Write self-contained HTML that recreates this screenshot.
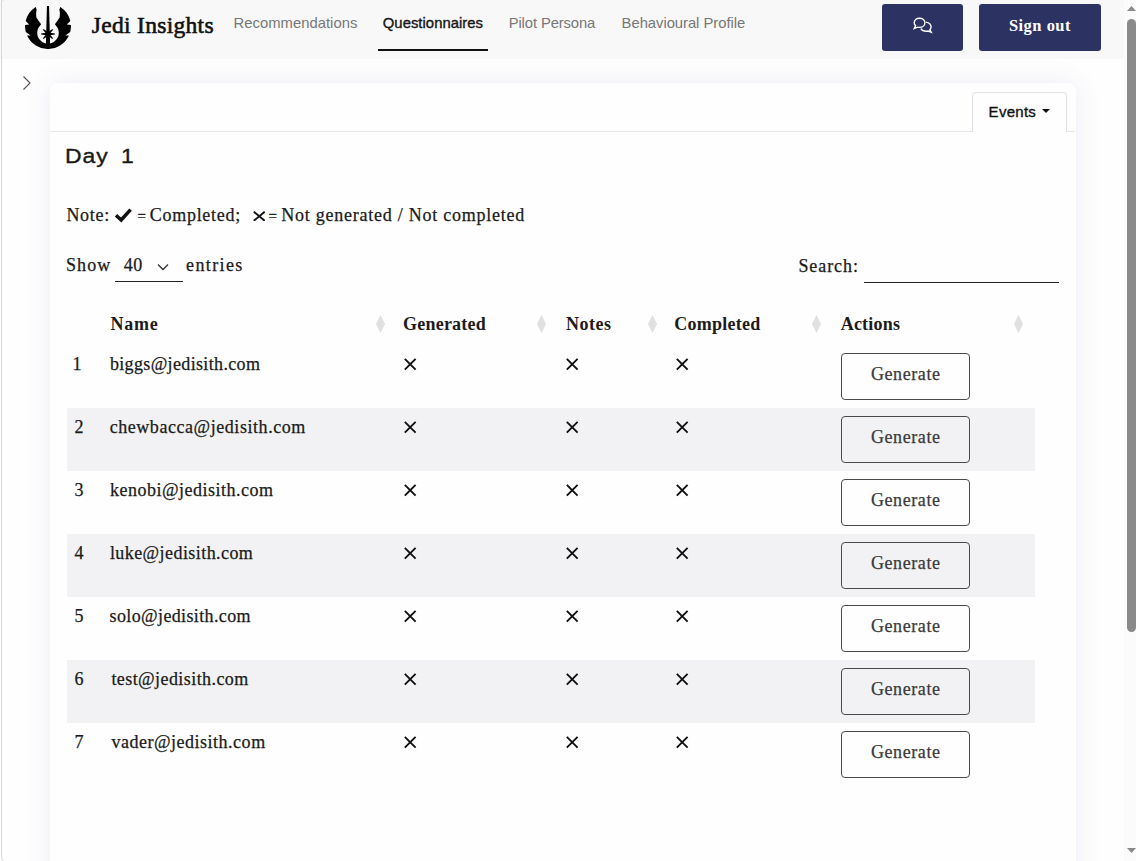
<!DOCTYPE html>
<html><head><meta charset="utf-8">
<style>
html,body{margin:0;padding:0;width:1136px;height:861px;overflow:hidden;background:#fefefe;}
body{position:relative;font-family:"Liberation Serif",serif;color:#1a1a1a;}
.a{position:absolute;}
.t{position:absolute;white-space:nowrap;}
.sans{font-family:"Liberation Sans",sans-serif;}
#hdr{left:0;top:0;width:1136px;height:59px;background:#f8f8f8;}
.nav{font-family:"Liberation Sans",sans-serif;font-size:14.8px;line-height:14.8px;color:#777;top:15.5px;}
.btn{background:#2c3262;border-radius:3px;}
#card{left:50px;top:83px;width:1026px;height:900px;background:#fefefe;border-radius:8px;box-shadow:0 0 28px rgba(50,70,150,0.09);}
.bt{font-size:18px;line-height:18px;color:#1a1a1a;-webkit-text-stroke:0.25px #1a1a1a;}
.th{font-size:18px;line-height:18px;font-weight:bold;color:#1c1c1c;top:315px;}
.stripe{left:67px;width:968px;height:63px;background:#f2f2f4;}
.gen{left:841px;width:127px;height:45px;border:1px solid #4a4a4a;border-radius:4px;}
.gen span{position:absolute;left:28.9px;top:10.8px;font-size:18px;line-height:18px;letter-spacing:0.6px;color:#3a3a3a;white-space:nowrap;-webkit-text-stroke:0.25px #3a3a3a;}
</style></head>
<body>
<div id="hdr" class="a"></div>
<div class="a" style="left:1px;top:-1px;width:1300px;height:863px;border-left:1px solid #d8d8d8;border-top:1px solid #d8d8d8;border-bottom:1px solid #d8d8d8;border-radius:3px 0 0 8px;"></div>
<svg class="a" style="left:25px;top:6px" width="46" height="43" viewBox="0 0 46 43">
  <path fill="#000" d="M10.7 1 A23 23 0 0 0 0.7 14.9 L4.2 18.5 L0.05 19.1 A23 23 0 0 0 0.8 25.9 L5.6 29.5 L2.05 29.5 A23 23 0 0 0 43.95 29.5 L40.4 29.5 L45.2 25.9 A23 23 0 0 0 45.95 19.1 L41.8 18.5 L45.3 14.9 A23 23 0 0 0 35.3 1 L34.4 3.4 L34.9 7.1 L34.7 11.3 L32.3 14.9 L29.9 18.2 L32.4 21.6 A10.8 10.8 0 1 1 13.6 21.6 L16.1 18.2 L13.7 14.9 L11.3 11.3 L11.1 7.1 L11.6 3.4 Z"/>
  <path fill="#000" d="M21.95 -0.2 L24.05 -0.2 L25.1 38 L20.9 38 Z"/>
  <path fill="#000" d="M23 29.4 L16.1 28.5 L16.1 27.5 L23 26.6 Z M23 26.6 L29.9 27.5 L29.9 28.5 L23 29.4 Z M23.99 28.99 L18.69 33.02 L17.98 32.31 L22.01 27.01 Z M23.99 27.01 L28.02 32.31 L27.31 33.02 L22.01 28.99 Z M22.01 28.99 L17.98 23.69 L18.69 22.98 L23.99 27.01 Z M22.01 27.01 L27.31 22.98 L28.02 23.69 L23.99 28.99 Z"/>
</svg>
<div class="t" style="left:91.8px;top:13.5px;font-size:23.5px;line-height:23.5px;letter-spacing:0.3px;color:#111;-webkit-text-stroke:0.6px #111;">Jedi Insights</div>
<div class="t nav" style="left:233.5px;letter-spacing:0.036px;">Recommendations</div>
<div class="t nav" style="left:382.8px;letter-spacing:0.05px;color:#151515;-webkit-text-stroke:0.35px #151515;">Questionnaires</div>
<div class="t nav" style="left:508.7px;letter-spacing:-0.117px;">Pilot Persona</div>
<div class="t nav" style="left:621.6px;letter-spacing:-0.033px;">Behavioural Profile</div>
<div class="a" style="left:378px;top:49px;width:110px;height:2px;background:#111;"></div>
<div class="a btn" style="left:882px;top:4px;width:81px;height:47px;"></div>
<svg class="a" style="left:912px;top:17px" width="22" height="18.3" viewBox="0 0 24 20">
  <g fill="none" stroke="#fff" stroke-width="1.5">
    <path d="M8.2 1.3 C4.9 1.3 2.4 3.4 2.4 6.3 C2.4 7.6 3 8.8 3.9 9.6 L2.4 12.6 L6.2 11.1 C6.9 11.3 7.5 11.4 8.2 11.4 C11.5 11.4 14.1 9.2 14.1 6.3 C14.1 3.4 11.5 1.3 8.2 1.3 Z"/>
    <path d="M15.3 5.6 C18.4 6.2 20.8 8.3 20.8 10.9 C20.8 12.1 20.3 13.2 19.5 14 L21 16.6 L17.6 15.3 C16.9 15.5 16.2 15.6 15.5 15.6 C12.8 15.6 10.6 14.5 9.6 12.8"/>
  </g>
</svg>
<div class="a btn" style="left:979px;top:4px;width:122px;height:47px;"></div>
<div class="t" style="left:1008.9px;top:17.5px;font-size:16.5px;line-height:16.5px;letter-spacing:0.486px;font-weight:bold;color:#fff;">Sign out</div>
<div class="a" style="left:1124px;top:0;width:12px;height:861px;background:#fbfbfb;"></div>
<svg class="a" style="left:1124px;top:0" width="12" height="861">
  <path d="M3 11 L7.5 6 L12 11 Z" fill="#8a8a8a"/>
  <rect x="3" y="19" width="9" height="613" rx="4.5" fill="#8a8a8a"/>
  <path d="M3 848 L12 848 L7.5 853 Z" fill="#8a8a8a"/>
</svg>
<svg class="a" style="left:20px;top:74px" width="14" height="18" viewBox="0 0 14 18">
  <path d="M3.5 2.5 L10 9 L3.5 15.5" fill="none" stroke="#5a4d4d" stroke-width="1.1"/>
</svg>
<div id="card" class="a"></div>
<div class="a" style="left:50px;top:131px;width:923px;height:1px;background:#e6e6e6;"></div>
<div class="a" style="left:1066px;top:131px;width:9px;height:1px;background:#e6e6e6;"></div>
<div class="a" style="left:972px;top:92px;width:93px;height:39px;border:1px solid #dee2e6;border-bottom:none;border-radius:4px 4px 0 0;background:#fefefe;"></div>
<div class="t sans" style="left:988.6px;top:104.2px;font-size:15px;line-height:15px;letter-spacing:0.28px;color:#111;-webkit-text-stroke:0.35px #111;">Events</div>
<svg class="a" style="left:1042px;top:109px" width="8" height="4"><path d="M0 0 L8 0 L4 4 Z" fill="#111"/></svg>
<div class="t sans" style="left:64.9px;top:146px;font-size:20.5px;line-height:20.5px;letter-spacing:0.8px;word-spacing:4.6px;color:#1a1a1a;-webkit-text-stroke:0.35px #1a1a1a;transform:scaleX(1.12);transform-origin:0 0;">Day 1</div>
<div class="t bt" style="left:66.4px;top:206px;letter-spacing:0.7px;">Note:</div>
<svg class="a" style="left:113px;top:206px" width="20" height="18" viewBox="0 0 20 18"><path d="M3 9.2 L8.2 14 L17.6 3.6" fill="none" stroke="#111" stroke-width="3.5" stroke-linejoin="miter"/></svg>
<div class="t" style="left:137.6px;top:209px;font-size:15px;line-height:15px;color:#1a1a1a;-webkit-text-stroke:0.3px #1a1a1a;">=</div>
<div class="t bt" style="left:149.8px;top:206px;letter-spacing:0.711px;">Completed;</div>
<svg class="a" style="left:252.5px;top:210.5px" width="12.5" height="10.5" viewBox="0 0 12.5 10.5"><path d="M0.8 0.7 L11.7 9.8 M11.7 0.7 L0.8 9.8" stroke="#111" stroke-width="1.9" fill="none"/></svg>
<div class="t" style="left:268.6px;top:209px;font-size:15px;line-height:15px;color:#1a1a1a;-webkit-text-stroke:0.3px #1a1a1a;">=</div>
<div class="t bt" style="left:281.2px;top:206px;letter-spacing:0.757px;">Not generated / Not completed</div>
<div class="t bt" style="left:66px;top:256px;letter-spacing:1.067px;">Show</div>
<div class="t bt" style="left:123.7px;top:256px;letter-spacing:0.6px;">40</div>
<svg class="a" style="left:156px;top:262px" width="14" height="10" viewBox="0 0 14 10"><path d="M2 2.5 L7 7.5 L12 2.5" fill="none" stroke="#333" stroke-width="1.3"/></svg>
<div class="a" style="left:115px;top:281px;width:68px;height:1px;background:#222;"></div>
<div class="t bt" style="left:186.1px;top:256px;letter-spacing:1.367px;">entries</div>
<div class="t bt" style="left:798.4px;top:256.5px;letter-spacing:0.933px;">Search:</div>
<div class="a" style="left:864px;top:282px;width:195px;height:1px;background:#222;"></div>
<div class="t th" style="left:110.6px;letter-spacing:0.7px;">Name</div>
<div class="t th" style="left:403px;letter-spacing:0.225px;">Generated</div>
<div class="t th" style="left:566px;letter-spacing:0.5px;">Notes</div>
<div class="t th" style="left:674.2px;letter-spacing:0.275px;">Completed</div>
<div class="t th" style="left:840.7px;letter-spacing:0.2px;">Actions</div>
<svg class="a" style="left:375.5px;top:315px" width="9" height="18" viewBox="0 0 9 18"><path d="M4.5 0 L9 9 L4.5 18 L0 9 Z" fill="#e0e0e0"/></svg>
<svg class="a" style="left:537px;top:315px" width="9" height="18" viewBox="0 0 9 18"><path d="M4.5 0 L9 9 L4.5 18 L0 9 Z" fill="#e0e0e0"/></svg>
<svg class="a" style="left:647.5px;top:315px" width="9" height="18" viewBox="0 0 9 18"><path d="M4.5 0 L9 9 L4.5 18 L0 9 Z" fill="#e0e0e0"/></svg>
<svg class="a" style="left:812px;top:315px" width="9" height="18" viewBox="0 0 9 18"><path d="M4.5 0 L9 9 L4.5 18 L0 9 Z" fill="#e0e0e0"/></svg>
<svg class="a" style="left:1014px;top:315px" width="9" height="18" viewBox="0 0 9 18"><path d="M4.5 0 L9 9 L4.5 18 L0 9 Z" fill="#e0e0e0"/></svg>
<div class="t bt" style="left:72.6px;top:355px;">1</div>
<div class="t bt" style="left:109.9px;top:355px;letter-spacing:0.353px;">biggs@jedisith.com</div>
<svg class="a" style="left:403.6px;top:357.6px" width="13" height="13" viewBox="0 0 13 13"><path d="M0.8 0.8 L11.6 11.6 M11.6 0.8 L0.8 11.6" stroke="#111" stroke-width="1.9" fill="none"/></svg>
<svg class="a" style="left:565.6px;top:357.6px" width="13" height="13" viewBox="0 0 13 13"><path d="M0.8 0.8 L11.6 11.6 M11.6 0.8 L0.8 11.6" stroke="#111" stroke-width="1.9" fill="none"/></svg>
<svg class="a" style="left:675.6px;top:357.6px" width="13" height="13" viewBox="0 0 13 13"><path d="M0.8 0.8 L11.6 11.6 M11.6 0.8 L0.8 11.6" stroke="#111" stroke-width="1.9" fill="none"/></svg>
<div class="a gen" style="top:353px;"><span>Generate</span></div>
<div class="a stripe" style="top:408px;"></div>
<div class="t bt" style="left:74.5px;top:418px;">2</div>
<div class="t bt" style="left:109.7px;top:418px;letter-spacing:0.552px;">chewbacca@jedisith.com</div>
<svg class="a" style="left:403.6px;top:420.6px" width="13" height="13" viewBox="0 0 13 13"><path d="M0.8 0.8 L11.6 11.6 M11.6 0.8 L0.8 11.6" stroke="#111" stroke-width="1.9" fill="none"/></svg>
<svg class="a" style="left:565.6px;top:420.6px" width="13" height="13" viewBox="0 0 13 13"><path d="M0.8 0.8 L11.6 11.6 M11.6 0.8 L0.8 11.6" stroke="#111" stroke-width="1.9" fill="none"/></svg>
<svg class="a" style="left:675.6px;top:420.6px" width="13" height="13" viewBox="0 0 13 13"><path d="M0.8 0.8 L11.6 11.6 M11.6 0.8 L0.8 11.6" stroke="#111" stroke-width="1.9" fill="none"/></svg>
<div class="a gen" style="top:416px;"><span>Generate</span></div>
<div class="t bt" style="left:74.5px;top:481px;">3</div>
<div class="t bt" style="left:109.9px;top:481px;letter-spacing:0.5px;">kenobi@jedisith.com</div>
<svg class="a" style="left:403.6px;top:483.6px" width="13" height="13" viewBox="0 0 13 13"><path d="M0.8 0.8 L11.6 11.6 M11.6 0.8 L0.8 11.6" stroke="#111" stroke-width="1.9" fill="none"/></svg>
<svg class="a" style="left:565.6px;top:483.6px" width="13" height="13" viewBox="0 0 13 13"><path d="M0.8 0.8 L11.6 11.6 M11.6 0.8 L0.8 11.6" stroke="#111" stroke-width="1.9" fill="none"/></svg>
<svg class="a" style="left:675.6px;top:483.6px" width="13" height="13" viewBox="0 0 13 13"><path d="M0.8 0.8 L11.6 11.6 M11.6 0.8 L0.8 11.6" stroke="#111" stroke-width="1.9" fill="none"/></svg>
<div class="a gen" style="top:479px;"><span>Generate</span></div>
<div class="a stripe" style="top:534px;"></div>
<div class="t bt" style="left:74.5px;top:544px;">4</div>
<div class="t bt" style="left:109.9px;top:544px;letter-spacing:0.431px;">luke@jedisith.com</div>
<svg class="a" style="left:403.6px;top:546.6px" width="13" height="13" viewBox="0 0 13 13"><path d="M0.8 0.8 L11.6 11.6 M11.6 0.8 L0.8 11.6" stroke="#111" stroke-width="1.9" fill="none"/></svg>
<svg class="a" style="left:565.6px;top:546.6px" width="13" height="13" viewBox="0 0 13 13"><path d="M0.8 0.8 L11.6 11.6 M11.6 0.8 L0.8 11.6" stroke="#111" stroke-width="1.9" fill="none"/></svg>
<svg class="a" style="left:675.6px;top:546.6px" width="13" height="13" viewBox="0 0 13 13"><path d="M0.8 0.8 L11.6 11.6 M11.6 0.8 L0.8 11.6" stroke="#111" stroke-width="1.9" fill="none"/></svg>
<div class="a gen" style="top:542px;"><span>Generate</span></div>
<div class="t bt" style="left:74.5px;top:607px;">5</div>
<div class="t bt" style="left:109.6px;top:607px;letter-spacing:0.369px;">solo@jedisith.com</div>
<svg class="a" style="left:403.6px;top:609.6px" width="13" height="13" viewBox="0 0 13 13"><path d="M0.8 0.8 L11.6 11.6 M11.6 0.8 L0.8 11.6" stroke="#111" stroke-width="1.9" fill="none"/></svg>
<svg class="a" style="left:565.6px;top:609.6px" width="13" height="13" viewBox="0 0 13 13"><path d="M0.8 0.8 L11.6 11.6 M11.6 0.8 L0.8 11.6" stroke="#111" stroke-width="1.9" fill="none"/></svg>
<svg class="a" style="left:675.6px;top:609.6px" width="13" height="13" viewBox="0 0 13 13"><path d="M0.8 0.8 L11.6 11.6 M11.6 0.8 L0.8 11.6" stroke="#111" stroke-width="1.9" fill="none"/></svg>
<div class="a gen" style="top:605px;"><span>Generate</span></div>
<div class="a stripe" style="top:660px;"></div>
<div class="t bt" style="left:74.5px;top:670px;">6</div>
<div class="t bt" style="left:111.4px;top:670px;letter-spacing:0.425px;">test@jedisith.com</div>
<svg class="a" style="left:403.6px;top:672.6px" width="13" height="13" viewBox="0 0 13 13"><path d="M0.8 0.8 L11.6 11.6 M11.6 0.8 L0.8 11.6" stroke="#111" stroke-width="1.9" fill="none"/></svg>
<svg class="a" style="left:565.6px;top:672.6px" width="13" height="13" viewBox="0 0 13 13"><path d="M0.8 0.8 L11.6 11.6 M11.6 0.8 L0.8 11.6" stroke="#111" stroke-width="1.9" fill="none"/></svg>
<svg class="a" style="left:675.6px;top:672.6px" width="13" height="13" viewBox="0 0 13 13"><path d="M0.8 0.8 L11.6 11.6 M11.6 0.8 L0.8 11.6" stroke="#111" stroke-width="1.9" fill="none"/></svg>
<div class="a gen" style="top:668px;"><span>Generate</span></div>
<div class="t bt" style="left:74.5px;top:733px;">7</div>
<div class="t bt" style="left:111.4px;top:733px;letter-spacing:0.512px;">vader@jedisith.com</div>
<svg class="a" style="left:403.6px;top:735.6px" width="13" height="13" viewBox="0 0 13 13"><path d="M0.8 0.8 L11.6 11.6 M11.6 0.8 L0.8 11.6" stroke="#111" stroke-width="1.9" fill="none"/></svg>
<svg class="a" style="left:565.6px;top:735.6px" width="13" height="13" viewBox="0 0 13 13"><path d="M0.8 0.8 L11.6 11.6 M11.6 0.8 L0.8 11.6" stroke="#111" stroke-width="1.9" fill="none"/></svg>
<svg class="a" style="left:675.6px;top:735.6px" width="13" height="13" viewBox="0 0 13 13"><path d="M0.8 0.8 L11.6 11.6 M11.6 0.8 L0.8 11.6" stroke="#111" stroke-width="1.9" fill="none"/></svg>
<div class="a gen" style="top:731px;"><span>Generate</span></div>
</body></html>
